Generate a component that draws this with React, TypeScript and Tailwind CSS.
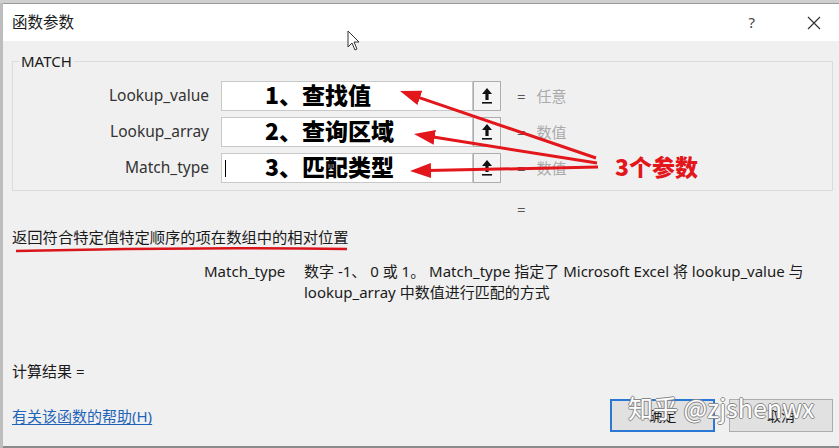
import { ArrowUpToLine } from "lucide-react";

const font = { fontFamily: '"Noto Sans", "Noto Sans CJK SC", sans-serif' };
const cjk = { fontFamily: '"Noto Sans CJK SC", sans-serif' };

interface ArgRow {
  name: string;
  note: string;
  result: string;
}

const rows: ArgRow[] = [
  { name: "Lookup_value", note: "1、查找值", result: "任意" },
  { name: "Lookup_array", note: "2、查询区域", result: "数值" },
  { name: "Match_type", note: "3、匹配类型", result: "数值" },
];

function RefButton() {
  return (
    <div className="w-[28px] h-[30px] border border-[#adadad] bg-[#f4f4f4] flex items-center justify-center">
      <svg width="14" height="18" viewBox="0 0 14 18">
        <path d="M7 1 L12 7 L8.6 7 L8.6 13 L5.4 13 L5.4 7 L2 7 Z" fill="#111" />
        <rect x="2" y="15" width="10" height="1.6" fill="#111" />
      </svg>
    </div>
  );
}

function Annotations() {
  // red arrows drawn over the dialog
  const lines = [
    { x1: 596, y1: 158, x2: 400, y2: 91 },
    { x1: 597, y1: 163, x2: 414, y2: 134 },
    { x1: 598, y1: 167, x2: 410, y2: 171 },
  ];
  return (
    <svg className="absolute left-0 top-0 pointer-events-none" width="839" height="448">
      <defs>
        <marker id="head" markerWidth="7" markerHeight="5" refX="1" refY="2.5" orient="auto" markerUnits="strokeWidth">
          <path d="M0 0 L7 2.5 L0 5 Z" fill="#e3161c" />
        </marker>
      </defs>
      {lines.map((l, i) => {
        const dx = l.x2 - l.x1;
        const dy = l.y2 - l.y1;
        const len = Math.hypot(dx, dy);
        const k = (len - 18) / len;
        return (
          <line key={i} x1={l.x1} y1={l.y1} x2={l.x1 + dx * k} y2={l.y1 + dy * k} stroke="#e3161c" strokeWidth="3" markerEnd="url(#head)" />
        );
      })}
      <path d="M16 251 Q180 247 347 249" stroke="#d9141a" strokeWidth="2.5" fill="none" />
    </svg>
  );
}

export default function App() {
  return (
    <div className="relative w-[839px] h-[448px] overflow-hidden bg-white text-[15px] text-[#1a1a1a]" style={font}>
      {/* sheet behind the dialog */}
      <div className="h-[3px] bg-[#cfcfcf]" />
      <div className="flex h-[445px]">
        <div className="w-[3px] bg-[#bdbdbd]" />
        <div className="flex-1 flex flex-col border-t border-[#9a9a9a]">
          {/* title bar */}
          <div className="h-[37px] bg-white flex items-center pl-[9px] pr-[18px]">
            <span className="flex-1 text-[15.5px]">函数参数</span>
            <span className="text-[#444] mr-[52px]">?</span>
            <svg width="14" height="14" viewBox="0 0 14 14">
              <path d="M1 1 L13 13 M13 1 L1 13" stroke="#333" strokeWidth="1.2" />
            </svg>
          </div>

          {/* body */}
          <div className="flex-1 bg-[#f0f0f0] pl-[9px] pr-[6px] pt-[20px] flex flex-col">
            <div className="relative h-[130px] border border-[#dcdcdc] flex flex-col gap-[6px] pt-[19px]">
              <span className="absolute -top-[11px] left-[6px] bg-[#f0f0f0] px-[2px] leading-[20px]">MATCH</span>
              {rows.map((r, i) => (
                <div key={r.name} className="flex items-center h-[30px]">
                  <span className="w-[196px] text-right text-[15.5px] text-[#333]">{r.name}</span>
                  <div className="ml-[12px] w-[252px] h-[30px] bg-white border border-[#c8c8c8] relative flex items-center">
                    {i === 2 && <span className="absolute left-[3px] top-[6px] w-px h-[17px] bg-black" />}
                    <span className="ml-[43px] -mt-[3px] text-[23px] font-black text-black leading-none" style={cjk}>
                      {r.note}
                    </span>
                  </div>
                  <RefButton />
                  <span className="ml-[16px] text-[#555]">=</span>
                  <span className="ml-[11px] text-[#aaa]">{r.result}</span>
                </div>
              ))}
            </div>

            <div className="h-[36px] flex items-center pl-[505px] text-[#555]">=</div>
            <div className="leading-[20px] text-[15.3px]">返回符合特定值特定顺序的项在数组中的相对位置</div>

            <div className="mt-[14px] flex leading-[21px]">
              <span className="ml-[192px] w-[100px]">Match_type</span>
              <span className="w-[520px]">
                数字 -1、 0 或 1。 Match_type 指定了 Microsoft Excel 将 lookup_value 与 lookup_array 中数值进行匹配的方式
              </span>
            </div>

            <div className="mt-[58px] leading-[20px]">计算结果 =</div>

            <div className="mt-[18px] flex items-start">
              <a className="mt-[7px] text-[#1f64b8] underline underline-offset-2 leading-[20px]">有关该函数的帮助(H)</a>
              <div className="flex-1" />
              <button className="w-[105px] h-[33px] bg-[#e1e1e1] border-2 border-[#2a78d4] text-[14px]">确定</button>
              <button className="ml-[14px] w-[104px] h-[33px] bg-[#e1e1e1] border border-[#adadad] text-[14px]">取消</button>
            </div>
          </div>
          <div className="h-[2px] bg-[#8a8a8a]" />
        </div>
      </div>

      <Annotations />

      <span className="absolute left-[615px] top-[155px] text-[23px] font-black text-[#e3161c] leading-none" style={cjk}>
        3个参数
      </span>

      {/* cursor */}
      <svg className="absolute left-[347px] top-[30px]" width="14" height="22" viewBox="0 0 14 22">
        <path d="M1 1 L1 17 L5 13 L8 20 L10 19 L7 12 L12 12 Z" fill="white" stroke="#333" strokeWidth="1" />
      </svg>

      {/* watermark */}
      <span
        className="absolute left-[628px] top-[395px] text-[25px] text-white leading-none"
        style={{ ...cjk, textShadow: "1px 0 0 #888, -1px 0 0 #888, 0 1px 0 #888, 0 -1px 0 #888" }}
      >
        知乎 @zjshenwx
      </span>
      <ArrowUpToLine className="hidden" />
    </div>
  );
}
